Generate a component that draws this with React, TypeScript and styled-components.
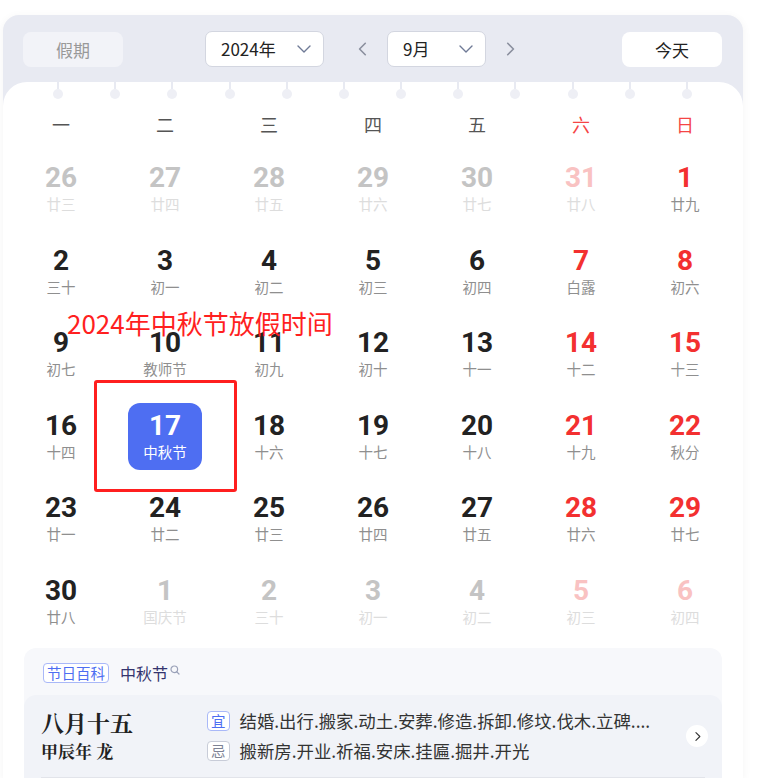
import React from 'react'
import styled, { createGlobalStyle } from 'styled-components'

const GlobalStyle = createGlobalStyle`
  body {
    margin: 0;
    background: #ffffff;
    font-family: "Noto Sans CJK SC", "Noto Sans", sans-serif;
  }
`

type Day = { n: number; lunar: string; other?: boolean; red?: boolean; selected?: boolean }

const rows: Day[][] = [
  [
    { n: 26, lunar: '廿三', other: true },
    { n: 27, lunar: '廿四', other: true },
    { n: 28, lunar: '廿五', other: true },
    { n: 29, lunar: '廿六', other: true },
    { n: 30, lunar: '廿七', other: true },
    { n: 31, lunar: '廿八', other: true, red: true },
    { n: 1, lunar: '廿九', red: true },
  ],
  [
    { n: 2, lunar: '三十' },
    { n: 3, lunar: '初一' },
    { n: 4, lunar: '初二' },
    { n: 5, lunar: '初三' },
    { n: 6, lunar: '初四' },
    { n: 7, lunar: '白露', red: true },
    { n: 8, lunar: '初六', red: true },
  ],
  [
    { n: 9, lunar: '初七' },
    { n: 10, lunar: '教师节' },
    { n: 11, lunar: '初九' },
    { n: 12, lunar: '初十' },
    { n: 13, lunar: '十一' },
    { n: 14, lunar: '十二', red: true },
    { n: 15, lunar: '十三', red: true },
  ],
  [
    { n: 16, lunar: '十四' },
    { n: 17, lunar: '中秋节', selected: true },
    { n: 18, lunar: '十六' },
    { n: 19, lunar: '十七' },
    { n: 20, lunar: '十八' },
    { n: 21, lunar: '十九', red: true },
    { n: 22, lunar: '秋分', red: true },
  ],
  [
    { n: 23, lunar: '廿一' },
    { n: 24, lunar: '廿二' },
    { n: 25, lunar: '廿三' },
    { n: 26, lunar: '廿四' },
    { n: 27, lunar: '廿五' },
    { n: 28, lunar: '廿六', red: true },
    { n: 29, lunar: '廿七', red: true },
  ],
  [
    { n: 30, lunar: '廿八' },
    { n: 1, lunar: '国庆节', other: true },
    { n: 2, lunar: '三十', other: true },
    { n: 3, lunar: '初一', other: true },
    { n: 4, lunar: '初二', other: true },
    { n: 5, lunar: '初三', other: true, red: true },
    { n: 6, lunar: '初四', other: true, red: true },
  ],
]

const weekdays = ['一', '二', '三', '四', '五', '六', '日']

const Card = styled.div`
  margin: 15px 0 0 3px;
  width: 740px;
  background: #e8eaf2;
  border-radius: 16px 16px 0 0;
  box-shadow: 0 2px 10px rgba(0, 0, 0, 0.05);
`

const Header = styled.div`
  display: flex;
  align-items: center;
  height: 67px;
  padding: 0 21px 0 20px;
  box-sizing: border-box;
`

const PillButton = styled.button<{ $muted?: boolean }>`
  width: 100px;
  height: 35px;
  border: none;
  border-radius: 8px;
  background: ${({ $muted }) => ($muted ? '#f2f3f8' : '#ffffff')};
  color: ${({ $muted }) => ($muted ? '#999999' : '#222222')};
  font-family: inherit;
  font-size: 17px;
  padding: 0;
  margin-top: 1px;
`

const Select = styled.div<{ $width: number; $offset?: number }>`
  display: flex;
  align-items: center;
  justify-content: space-between;
  width: ${({ $width }) => $width}px;
  margin-left: ${({ $offset }) => $offset ?? 0}px;
  height: 36px;
  box-sizing: border-box;
  padding: 0 12px 0 15px;
  background: #ffffff;
  border: 1px solid #d3d6e0;
  border-radius: 7px;
  font-size: 17px;
  color: #222222;
`

const ArrowButton = styled.div<{ $side: 'left' | 'right' }>`
  width: 24px;
  height: 36px;
  display: flex;
  align-items: center;
  justify-content: center;
  margin: ${({ $side }) => ($side === 'left' ? '0 12px 0 27px' : '0 0 0 12px')};
`

const Spacer = styled.div`
  flex: 1;
`

const Body = styled.div`
  position: relative;
  background: #ffffff;
  border-radius: 24px 24px 0 0;
  padding: 0 6px;
`

const Holes = styled.div`
  display: flex;
  justify-content: space-between;
  padding: 0 45px 0 44px;
  height: 22px;
`

const Hole = styled.div`
  width: 10px;
  display: flex;
  flex-direction: column;
  align-items: center;

  &::before {
    content: '';
    width: 2px;
    height: 7px;
    background: #e8eaf2;
  }
  &::after {
    content: '';
    width: 10px;
    height: 10px;
    border-radius: 50%;
    background: #eeeff5;
  }
`

const WeekRow = styled.div`
  display: grid;
  grid-template-columns: repeat(7, 104px);
  height: 44px;
  align-items: center;
`

const WeekLabel = styled.div<{ $red?: boolean }>`
  text-align: center;
  font-size: 18px;
  color: ${({ $red }) => ($red ? '#f54545' : '#555555')};
  margin-top: -5px;
`

const Grid = styled.div`
  display: grid;
  grid-template-columns: repeat(7, 104px);
  grid-auto-rows: 82.5px;
`

const Cell = styled.div`
  display: flex;
  justify-content: center;
`

const DayBox = styled.div<{ $selected?: boolean }>`
  width: 74px;
  height: 67px;
  margin-top: 7px;
  padding-top: 8px;
  box-sizing: border-box;
  border-radius: 12px;
  background: ${({ $selected }) => ($selected ? '#4e6ef2' : 'transparent')};
  display: flex;
  flex-direction: column;
  align-items: center;
`

const dayColor = (d: Day) => {
  if (d.selected) return '#ffffff'
  if (d.other) return d.red ? '#f9c2c2' : '#c4c4c4'
  return d.red ? '#f33030' : '#222222'
}

const DayNum = styled.div<{ $color: string }>`
  font-family: Roboto, "Liberation Sans", sans-serif;
  font-weight: 700;
  font-size: 28px;
  line-height: 30px;
  color: ${({ $color }) => $color};
`

const Lunar = styled.div<{ $other?: boolean; $selected?: boolean }>`
  margin-top: 1px;
  font-size: 14.5px;
  line-height: 20px;
  white-space: nowrap;
  color: ${({ $other, $selected }) => ($selected ? '#ffffff' : $other ? '#dddddd' : '#8f8f8f')};
`

const NoteText = styled.div`
  position: absolute;
  left: 64px;
  top: 226px;
  font-size: 26px;
  line-height: 30px;
  color: #ff1f1f;
  white-space: nowrap;
`

const NoteBox = styled.div`
  position: absolute;
  left: 91px;
  top: 298px;
  width: 143px;
  height: 112px;
  box-sizing: border-box;
  border: 3px solid #ff1f1f;
  border-radius: 3px;
`

const Panel = styled.div`
  margin: 5px 15px 0;
  background: #f7f8fb;
  border-radius: 12px 12px 0 0;
  padding-top: 15px;
`

const TagLine = styled.div`
  display: flex;
  align-items: center;
  padding-left: 19px;
  height: 20px;
`

const Tag = styled.span<{ $tone: 'blue' | 'grey' }>`
  display: inline-flex;
  align-items: center;
  justify-content: center;
  height: 20px;
  box-sizing: border-box;
  padding: 0 3px;
  border: 1px solid ${({ $tone }) => ($tone === 'blue' ? '#a9b8f8' : '#c8ccd8')};
  border-radius: 4px;
  background: #ffffff;
  color: ${({ $tone }) => ($tone === 'blue' ? '#4e6ef2' : '#7d8294')};
  font-size: 14.5px;
  line-height: 18px;
`

const FestivalName = styled.span`
  margin-left: 11px;
  font-size: 16px;
  line-height: 20px;
  color: #34346e;
  display: inline-flex;
  align-items: flex-start;
`

const SearchMark = styled.svg`
  margin: 2px 0 0 2px;
`

const Almanac = styled.div`
  margin-top: 12px;
  background: #f1f3f8;
  border-radius: 12px 12px 0 0;
  padding: 14px 17px 0;
`

const AlmanacRow = styled.div`
  display: flex;
  align-items: center;
  padding-bottom: 14px;
  border-bottom: 1px solid #e2e4ea;
`

const DateBlock = styled.div`
  width: 166px;
  font-family: "Noto Serif CJK SC", "Noto Sans CJK SC", serif;
  font-weight: 700;
  color: #222222;
`

const BigDate = styled.div`
  font-size: 23px;
  line-height: 28px;
`

const SmallDate = styled.div`
  font-size: 17px;
  line-height: 24px;
  margin-top: 2px;
`

const Lines = styled.div`
  flex: 1;
  display: flex;
  flex-direction: column;
  gap: 6px;
`

const Line = styled.div`
  display: flex;
  align-items: center;
  gap: 10px;
  font-size: 17.4px;
  line-height: 24px;
  color: #333333;
  white-space: nowrap;
`

const MoreButton = styled.div`
  width: 22px;
  height: 22px;
  border-radius: 50%;
  background: #ffffff;
  display: flex;
  align-items: center;
  justify-content: center;
  margin-right: -3px;
`

const Chevron = ({ dir, color, size = 12 }: { dir: 'left' | 'right' | 'down'; color: string; size?: number }) => {
  const d = dir === 'left' ? 'M8 2 L3 7 L8 12' : dir === 'right' ? 'M4 2 L9 7 L4 12' : 'M1 4 L7 10 L13 4'
  const w = dir === 'down' ? 14 : 12
  return (
    <svg width={size} height={size} viewBox={`0 0 ${w} 14`} fill="none">
      <path d={d} stroke={color} strokeWidth="1.4" strokeLinecap="round" strokeLinejoin="round" />
    </svg>
  )
}

export default function App() {
  return (
    <>
      <GlobalStyle />
      <Card>
        <Header>
          <PillButton $muted>假期</PillButton>
          <Select $width={119} $offset={82}>
            <span>2024年</span>
            <Chevron dir="down" color="#6f7a96" size={14} />
          </Select>
          <ArrowButton $side="left">
            <Chevron dir="left" color="#8a8f9e" size={16} />
          </ArrowButton>
          <Select $width={99}>
            <span>9月</span>
            <Chevron dir="down" color="#6f7a96" size={14} />
          </Select>
          <ArrowButton $side="right">
            <Chevron dir="right" color="#8a8f9e" size={16} />
          </ArrowButton>
          <Spacer />
          <PillButton>今天</PillButton>
        </Header>
        <Body>
          <Holes>
            {Array.from({ length: 12 }).map((_, i) => (
              <Hole key={i} />
            ))}
          </Holes>
          <WeekRow>
            {weekdays.map((w, i) => (
              <WeekLabel key={w} $red={i >= 5}>
                {w}
              </WeekLabel>
            ))}
          </WeekRow>
          <Grid>
            {rows.flat().map((d, i) => (
              <Cell key={i}>
                <DayBox $selected={d.selected}>
                  <DayNum $color={dayColor(d)}>{d.n}</DayNum>
                  <Lunar $other={d.other} $selected={d.selected}>
                    {d.lunar}
                  </Lunar>
                </DayBox>
              </Cell>
            ))}
          </Grid>
          <NoteText>2024年中秋节放假时间</NoteText>
          <NoteBox />
          <Panel>
            <TagLine>
              <Tag $tone="blue">节日百科</Tag>
              <FestivalName>
                中秋节
                <SearchMark width="10" height="10" viewBox="0 0 10 10" fill="none">
                  <circle cx="4.3" cy="4.3" r="3.3" stroke="#9aa1b8" strokeWidth="1.2" />
                  <path d="M6.8 6.8 L9 9" stroke="#9aa1b8" strokeWidth="1.2" strokeLinecap="round" />
                </SearchMark>
              </FestivalName>
            </TagLine>
            <Almanac>
              <AlmanacRow>
                <DateBlock>
                  <BigDate>八月十五</BigDate>
                  <SmallDate>甲辰年 龙</SmallDate>
                </DateBlock>
                <Lines>
                  <Line>
                    <Tag $tone="blue">宜</Tag>
                    <span>结婚.出行.搬家.动土.安葬.修造.拆卸.修坟.伐木.立碑....</span>
                  </Line>
                  <Line>
                    <Tag $tone="grey">忌</Tag>
                    <span>搬新房.开业.祈福.安床.挂匾.掘井.开光</span>
                  </Line>
                </Lines>
                <MoreButton>
                  <Chevron dir="right" color="#333333" size={11} />
                </MoreButton>
              </AlmanacRow>
            </Almanac>
          </Panel>
        </Body>
      </Card>
    </>
  )
}
